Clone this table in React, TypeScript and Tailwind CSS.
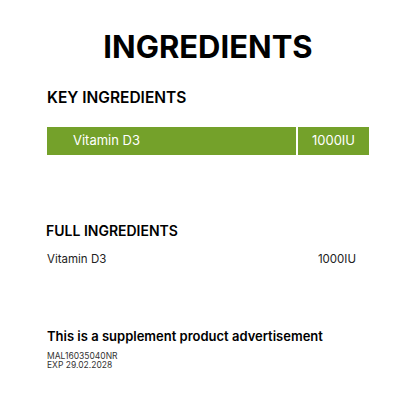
export default function App() {
  return (
    <div className="w-[416px] h-[416px] bg-white text-black font-['Inter',sans-serif]">
      <div className="px-[47px] pt-[29px]">
        <h1 className="text-center text-[31px] leading-[36px] font-bold">INGREDIENTS</h1>

        <h2 className="mt-[23px] text-[15.5px] leading-[20px] font-semibold">KEY INGREDIENTS</h2>
        <div className="mt-[19px] flex h-[28px] w-[322px] bg-[#74a12a] text-white text-[13px]">
          <div className="flex-1 flex items-center pl-[26px]">Vitamin D3</div>
          <div className="w-[2px] bg-white" />
          <div className="w-[71px] flex items-center justify-center">1000IU</div>
        </div>

        <h2 className="mt-[66px] -ml-[1px] text-[14px] leading-[20px] font-semibold">FULL INGREDIENTS</h2>
        <div className="mt-[11px] flex justify-between w-[309px] text-[11.5px] leading-[14px] text-[#222]">
          <span>Vitamin D3</span>
          <span>1000IU</span>
        </div>

        <p className="mt-[61px] text-[13px] leading-[18px] font-semibold">This is a supplement product advertisement</p>
        <div className="mt-[7px] text-[8.5px] leading-[9px] text-[#333]">
          <div>MAL16035040NR</div>
          <div>EXP 29.02.2028</div>
        </div>
      </div>
    </div>
  );
}
